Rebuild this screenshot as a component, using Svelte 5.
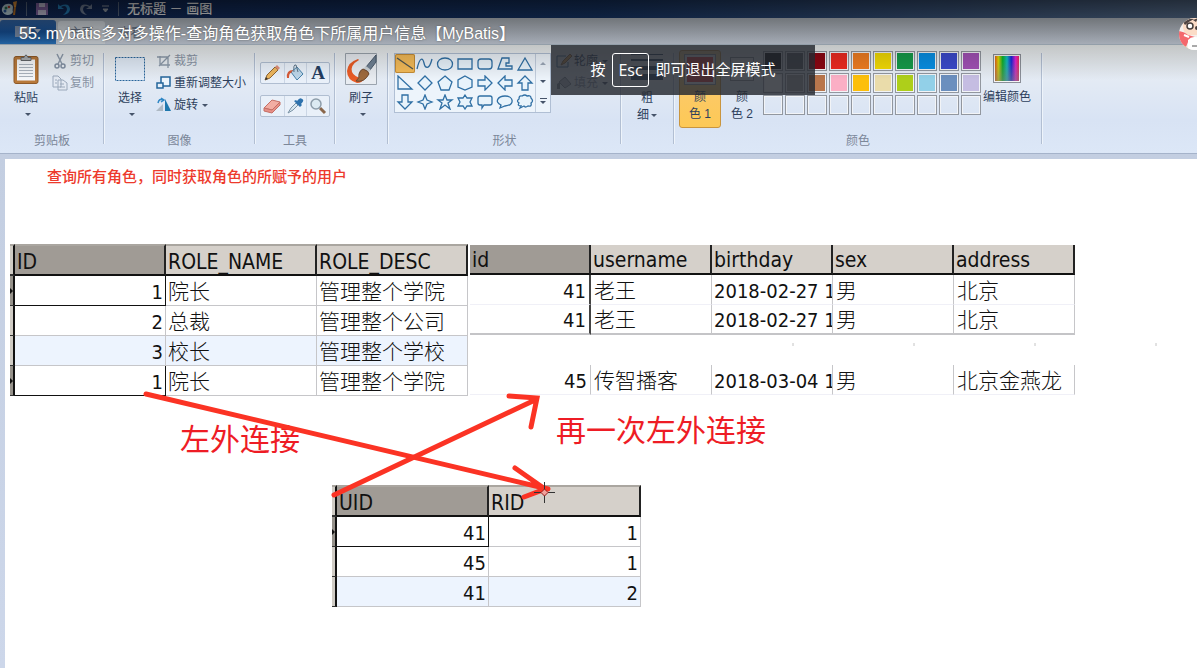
<script>
  const shapes = [
    'M2 2 L18 13',
    'M2 13 C5 0 8 2 9 7 S14 15 17 3',
    'M10 2 C20 2 20 14 10 14 C0 14 0 2 10 2Z',
    'M3 3H17V13H3Z',
    'M6 3H14Q17 3 17 6V10Q17 13 14 13H6Q3 13 3 10V6Q3 3 6 3Z',
    'M3 13L7 2H14V7H11V10H17V13Z',
    'M10 2L17 14H3Z',
    'M3 1V14H17Z',
    'M10 1L17 8L10 15L3 8Z',
    'M10 1L17 7L14 15H6L3 7Z',
    'M10 1L17 5V12L10 15L3 12V5Z',
    'M3 5H10V1L17 8L10 15V11H3Z',
    'M17 5H10V1L3 8L10 15V11H17Z',
    'M10 1L17 8H13V15H7V8H3Z',
    'M7 1H13V8H17L10 15L3 8H7Z',
    'M10 1L12 6L17 8L12 10L10 15L8 10L3 8L8 6Z',
    'M10 1L12 6H17L13 9L15 15L10 11L5 15L7 9L3 6H8Z',
    'M10 1L12 4H17L15 8L17 12H12L10 15L8 12H3L5 8L3 4H8Z',
    'M5 2H15Q17 2 17 4V9Q17 11 15 11H9L7 14V11H5Q3 11 3 9V4Q3 2 5 2Z',
    'M10 2C19 2 20 11 10 12L5 14L6 11C-1 8 3 2 10 2Z',
    'M7 2Q10 0 12 2Q16 1 16 4Q19 7 16 9Q17 13 13 12Q10 14 9 12L5 14L6 12Q2 12 4 9Q1 7 4 5Q4 1 7 2Z'
  ];
  const palette = [
    '#000000', '#606468', '#8b0612', '#ee2a20', '#f07d22', '#f2da04', '#169b4a', '#088fe4', '#3a49cc', '#a151b5',
    '#ffffff', '#aaaaaa', '#b9764c', '#fbafc5', '#fdbf0b', '#eadcaa', '#aecf1a', '#92d0e8', '#6b8fbe', '#c5bde2',
    '', '', '', '', '', '', '', '', '', ''
  ];
  const roles = [
    ['1', '院长', '管理整个学院'],
    ['2', '总裁', '管理整个公司'],
    ['3', '校长', '管理整个学校'],
    ['1', '院长', '管理整个学院']
  ];
  const users = [
    ['41', '老王', '2018-02-27 1', '男', '北京'],
    ['41', '老王', '2018-02-27 1', '男', '北京'],
    null,
    ['45', '传智播客', '2018-03-04 1', '男', '北京金燕龙']
  ];
  const links = [['41', '1'], ['45', '1'], ['41', '2']];
  let selected = $state(0);
</script>

<div class="app">
  <header class="titlebar">
    <svg width="18" height="18" viewBox="0 0 18 18"><path d="M2 11C1 5 8 2 12 5C14 7 12 9 13 12C11 16 4 16 2 11Z" fill="#c4dce4"/><circle cx="6" cy="8" r="1.500" fill="#277b59"/><circle cx="9" cy="7" r="1.300" fill="#b94031"/><circle cx="5" cy="11" r="1.500" fill="#305fa5"/><path d="M14 15L15 7" stroke="#be7323" stroke-width="2"/><path d="M13 2L17 1L16 7H14Z" fill="#ed9838"/></svg>
    <i class="bar"></i>
    <button class="quick" aria-label="保存"><svg width="14" height="14" viewBox="0 0 14 14"><path d="M1 1H13V13H1Z" fill="#8c6baf"/><path d="M4 1H10V5H4ZM3 8H11V13H3Z" fill="#d0cbe4"/></svg></button>
    <button class="quick" aria-label="撤消"><svg width="14" height="14" viewBox="0 0 14 14"><path d="M1 2V7H7L4 5Q9 2 10 7Q10 10 6 13Q13 12 13 7Q12 0 3 4Z" fill="#2585c4"/></svg></button>
    <button class="quick" aria-label="重做"><svg width="14" height="14" viewBox="0 0 14 14"><path d="M13 2V7H7L10 5Q5 2 4 7Q4 10 8 13Q1 12 1 7Q2 0 11 4Z" fill="#77869f"/></svg></button>
    <button class="quick" aria-label="自定义"><svg width="9" height="8" viewBox="0 0 9 8"><path d="M1 1H8M2 4H7L4.500 7Z" fill="#9ca5b1" stroke="#9ca5b1"/></svg></button>
    <i class="bar"></i>
    <span>无标题 － 画图</span>
  </header>

  <nav class="tabs">
    <button class="file" aria-label="文件"><svg width="28" height="14" viewBox="0 0 28 14"><path d="M1 1H15V12H1Z" fill="#8195b2"/><path d="M20 4H27L23.500 8Z" fill="#acbace"/></svg></button>
    <button class="tab active">主页</button>
    <button class="tab">查看</button>
  </nav>

  <section class="ribbon">
    <div class="group clipboard">
      <div class="body">
        <button class="big">
          <svg width="26" height="32" viewBox="0 0 26 31"><rect x="1" y="3" width="24" height="27" rx="2" fill="#b8793a" stroke="#8f5a28"/><path d="M4 6H22V27H4Z" fill="#f5f7fa"/><path d="M6 11H20M6 14H20M6 17H20M6 20H20M6 23H20" stroke="#aab2bc"/><path d="M8 7V4H11Q13-1 15 4H18V7Z" fill="#a9adb0" stroke="#626568"/></svg>
          <span>粘贴</span><i class="caret"></i>
        </button>
        <div class="stack">
          <button class="cmd off"><svg width="16" height="16" viewBox="0 0 16 16"><path d="M5 1L10 11M11 1L6 11" stroke="#8f9cad" stroke-width="1.500"/><circle cx="5" cy="13" r="2" fill="none" stroke="#8290a3" stroke-width="1.500"/><circle cx="11" cy="13" r="2" fill="none" stroke="#8290a3" stroke-width="1.500"/></svg>剪切</button>
          <button class="cmd off"><svg width="16" height="16" viewBox="0 0 16 16"><path d="M1 1H6L9 4V12H1ZM6 5H11L15 8V15H6Z" fill="#e3e9f2" stroke="#9aa8ba"/><path d="M8 9H12M8 12H13M3 5H5M3 8H5" stroke="#9aa8ba"/></svg>复制</button>
        </div>
      </div>
      <h2>剪贴板</h2>
    </div>

    <div class="group image">
      <div class="body">
        <button class="big"><svg width="32" height="32" viewBox="0 0 32 32"><rect x="1.500" y="4.500" width="29" height="23" fill="#e1ebf7" stroke="#28659a" stroke-dasharray="2 1"/></svg><span>选择</span><i class="caret"></i></button>
        <div class="stack">
          <button class="cmd off"><svg width="16" height="16" viewBox="0 0 16 16"><path d="M4 3V12H14M1 4H12V15M3 13L14 2" fill="none" stroke="#8c9aaa" stroke-width="1.300"/></svg>裁剪</button>
          <button class="cmd"><svg width="16" height="16" viewBox="0 0 16 16"><path d="M5 2H14V11H5Z" fill="#edf5fc" stroke="#24659b" stroke-width="1.500"/><path d="M1 8H7V13H1Z" fill="#e6f0fa" stroke="#24659b" stroke-width="1.500"/></svg>重新调整大小</button>
          <button class="cmd"><svg width="16" height="16" viewBox="0 0 16 16"><path d="M9 2V14H15Z" fill="#1e77ad"/><path d="M7 7V14H0Z" fill="#aeb9c4"/><path d="M2 6Q3 1 7 3M5 1L8 3L5 5" fill="none" stroke="#3087c5" stroke-width="1.500"/></svg>旋转<i class="caret"></i></button>
        </div>
      </div>
      <h2>图像</h2>
    </div>

    <div class="group tools">
      <div class="toolbox">
        <div class="toolrow">
          <button aria-label="铅笔"><svg width="18" height="18" viewBox="0 0 18 18"><path d="M2 16L4 11L12 3L15 6L7 14Z" fill="#edb65d" stroke="#8e6432"/><path d="M12 3L14 1L17 4L15 6Z" fill="#df8f7a"/><path d="M2 16L3 13L5 15Z" fill="#333"/></svg></button>
          <button aria-label="填充"><svg width="18" height="18" viewBox="0 0 18 18"><path d="M5 8L11 3L17 10L11 16Z" fill="#bcd6e9" stroke="#4682ab"/><path d="M8 8Q7 0 10 1L12 8" fill="none" stroke="#5b7488"/><path d="M1 14Q0 6 7 6L5 9Q3 9 3 14Z" fill="#d85b37"/></svg></button>
          <button class="glyph" aria-label="文本">A</button>
        </div>
        <div class="toolrow">
          <button aria-label="橡皮擦"><svg width="18" height="18" viewBox="0 0 18 18"><path d="M1 11L9 3L17 5L9 13Z" fill="#f2ada3" stroke="#c46e65"/><path d="M1 11L9 13L17 5V8L9 16L1 14Z" fill="#e78f86" stroke="#c46e65"/></svg></button>
          <button aria-label="取色器"><svg width="18" height="18" viewBox="0 0 18 18"><path d="M2 16L5 11L10 6L12 8L7 13Z" fill="#d9e7ef" stroke="#7a92a5"/><path d="M8 4L14 10L16 8L15 7Q19 3 16 2Q14 0 11 4L10 3Z" fill="#2e72ad"/></svg></button>
          <button aria-label="放大镜"><svg width="18" height="18" viewBox="0 0 18 18"><path d="M11 11L16 16" stroke="#8a674b" stroke-width="3"/><circle cx="7" cy="7" r="5" fill="#dceaf2" stroke="#8d9daa" stroke-width="1.500"/></svg></button>
        </div>
      </div>
      <h2>工具</h2>
    </div>

    <div class="group brush">
      <button class="big">
        <svg width="32" height="32" viewBox="0 0 32 32"><path d="M.5.5H31.500V31.500H.5Z" fill="#e8ecf1" stroke="#9ba4ae"/><path d="M13 6Q3 9 2 18Q2 27 12 30Q17 30 19 26Q9 24 7 19Q5 12 14 7Z" fill="#e95b25"/><path d="M31 2L21 14L25 17L31 9Z" fill="#6f8194" stroke="#49596a"/><path d="M21 13L26 17L23 20L18 16Z" fill="#cbd1d5"/><path d="M18 16Q24 18 24 21Q19 30 11 28Q15 25 14 21Q15 17 18 16Z" fill="#9e6a3d" stroke="#6d4930"/></svg>
        <span>刷子</span><i class="caret"></i>
      </button>
      <h2></h2>
    </div>

    <div class="group shape">
      <div class="body">
        <div class="gallery">
          <div class="shapes">
            {#each shapes as d, i}
              <button class:on={selected === i} aria-label={'形状 ' + (i + 1)} onclick={() => (selected = i)}><svg width="20" height="16" viewBox="0 0 20 16"><path {d} fill={i < 2 ? 'none' : '#e8f3fb'} stroke={i ? '#2f6fa4' : '#4f5550'} stroke-width="1.300"/></svg></button>
            {/each}
          </div>
          <div class="scroller"><button aria-label="向上"><i class="caret up"></i></button><button aria-label="向下"><i class="caret"></i></button><button class="more" aria-label="更多"><i class="caret"></i></button></div>
        </div>
        <div class="stack">
          <button class="cmd"><svg width="16" height="16" viewBox="0 0 16 16"><path d="M10 3H1V14H12V9" fill="none" stroke="#3a6c98"/><path d="M5 12L7 8L14 1L16 3L9 10Z" fill="#e3a64f" stroke="#90683f"/></svg>轮廓<i class="caret"></i></button>
          <button class="cmd off"><svg width="16" height="16" viewBox="0 0 16 16"><path d="M3 7L9 2L15 9L9 13Z" fill="#b5bec8" stroke="#7c8793"/><path d="M1 14V9L4 7V14Z" fill="#7c8793"/></svg>填充<i class="caret"></i></button>
        </div>
      </div>
      <h2>形状</h2>
    </div>

    <div class="group size">
      <button class="big"><svg width="32" height="32" viewBox="0 0 32 32"><path d="M0 1H32V2H0ZM0 6H32V8H0ZM0 13H32V17H0ZM0 21H32V27H0Z" fill="#2c4560"/></svg><span>粗</span><span class="second">细<i class="caret"></i></span></button>
      <h2></h2>
    </div>

    <div class="group colors">
      <div class="body">
        <button class="color chosen"><i class="well red"></i><span>颜</span><span class="second">色 1</span></button>
        <button class="color"><i class="well white"></i><span>颜</span><span class="second">色 2</span></button>
        <div class="palette">
          {#each palette as c}
            <button aria-label={c || '空'} style:background-color={c || 'transparent'}></button>
          {/each}
        </div>
        <button class="big edit"><i class="spectrum"></i><span>编辑颜色</span></button>
      </div>
      <h2>颜色</h2>
    </div>
  </section>

  <main class="workspace">
    <div class="canvas">
      <p class="note heading">查询所有角色，同时获取角色的所赋予的用户</p>

      <table class="grid roles">
        <thead><tr><th class="handle"></th><th class="key">ID</th><th>ROLE_NAME</th><th>ROLE_DESC</th></tr></thead>
        <tbody>
          {#each roles as r, i}
            <tr class:tint={i === 2} class:current={i === 0 || i === 3}><td class="handle">{#if i === 0 || i === 3}<i></i>{/if}</td><td class="num">{r[0]}</td><td>{r[1]}</td><td>{r[2]}</td></tr>
          {/each}
        </tbody>
      </table>

      <table class="grid users">
        <thead><tr><th class="key">id</th><th>username</th><th>birthday</th><th>sex</th><th>address</th></tr></thead>
        <tbody>
          {#each users as u, i}
            {#if u}
              <tr class:last={i === 1} class:dark={i < 2}>{#each u as v, j}<td class:num={j === 0} class:date={j === 2}>{v}</td>{/each}</tr>
            {:else}
              <tr class="gap"><td colspan="5"></td></tr>
            {/if}
          {/each}
        </tbody>
      </table>

      <table class="grid links">
        <thead><tr><th class="handle"></th><th class="key">UID</th><th>RID</th></tr></thead>
        <tbody>
          {#each links as l, i}
            <tr class:tint={i === 2} class:current={i === 0}><td class="handle">{#if i === 0}<i></i>{/if}</td><td class="num">{l[0]}</td><td class="num">{l[1]}</td></tr>
          {/each}
        </tbody>
      </table>

      <p class="note left">左外连接</p>
      <p class="note right">再一次左外连接</p>

      <svg class="ink" width="1192" height="509" viewBox="5 159 1192 509">
        <path d="M793 343V346M914 343V346M1035 343V346M1156 343V346" stroke="#c4c4c4"/>
        <g fill="none" stroke="#fb3324" stroke-width="5" stroke-linecap="round">
          <path d="M146 394L548 489M515 468L545 489L524 497"/>
          <path d="M334 495L535 400M509 396L537 398L531 427"/>
        </g>
        <path d="M544.500 482V489M544.500 495V503M534 492.500H541M548 492.500H555" stroke="#333"/>
        <path d="M544.500 489L548 492.500L544.500 496L541 492.500Z" fill="#f2a19b" stroke="#941b1b"/>
      </svg>
    </div>
  </main>

  <div class="shade"></div>
  <h1>55. mybatis多对多操作-查询角色获取角色下所属用户信息【MyBatis】</h1>
  <div class="toast">按 <kbd>Esc</kbd> 即可退出全屏模式</div>
  <svg class="avatar" width="32" height="32" viewBox="0 0 32 32">
    <defs><clipPath id="face"><circle cx="16" cy="16" r="16"/></clipPath></defs>
    <g clip-path="url(#face)"><path d="M0 0H32V32H0Z" fill="#f4f0ed"/><path d="M3 0H32V17H8Q3 13 4 5Z" fill="#fbdcc7"/><path d="M4 4Q9 0 15 1Q9 4 6 7ZM14 2L19 0L17 4Z" fill="#4d4341"/><circle cx="11" cy="8" r="3" fill="#fff" stroke="#443d3b" stroke-width="1.500"/><circle cx="18" cy="10" r="2" fill="#443d3b"/><path d="M0 13Q6 14 9 17L16 19L9 24L7 29L0 24Z" fill="#f4686d"/><path d="M5 17L10 19" stroke="#fff" stroke-width="2"/><path d="M9 22Q13 17 20 20V32H9Z" fill="#fff"/><path d="M13 28H18" stroke="#555"/><path d="M1 25L10 31H0Z" fill="#e9d06b"/></g>
  </svg>
</div>

<style>
  :global(body) { margin: 0; }
  .app { position: relative; min-height: 100vh; overflow: hidden; display: flex; flex-direction: column; background: #c9d3e5; font: 12px/16px "Liberation Sans", "Noto Sans CJK SC", sans-serif; color: #2d3f5c; }
  button { font: inherit; color: inherit; padding: 0; border: 0; background: none; }
  svg { display: block; flex: none; }
  h1, h2, p { margin: 0; font-weight: 400; }
  .titlebar { height: 18px; display: flex; align-items: center; gap: 8px; background: linear-gradient(90deg, #10285a, #18386c 50%, #587090); font-size: 13px; font-weight: 500; white-space: nowrap; }
  .titlebar .bar { width: 1px; height: 14px; background: #5c6c86; }
  .titlebar .quick { display: flex; }
  .titlebar span { color: #fff; }
  .tabs { height: 27px; display: flex; gap: 2px; background: linear-gradient(#bcc3cb, #ccd4e1); border-bottom: 1px solid #b4c2cf; box-sizing: border-box; }
  .file { width: 56px; height: 24px; margin-top: 2px; border-radius: 3px 3px 0 0; background: linear-gradient(#3467a8, #17549e 50%, #2c79c4); display: grid; place-items: center; }
  .tab { width: 47px; margin-top: 3px; color: #68758a; }
  .tab.active { background: #dce2e8; border-radius: 3px 3px 0 0; }

  .ribbon { display: flex; height: 109px; box-sizing: border-box; padding-top: 5px; background: linear-gradient(#eef1f1, #e4ebf4 30%, #d8e3f4 70%, #dce7f7); border-bottom: 1px solid #a5b3ca; }
  .group { position: relative; flex: none; box-sizing: border-box; padding-top: 3px; display: flex; flex-direction: column; justify-content: space-between; }
  .group::after { content: ""; position: absolute; right: 0; top: 3px; bottom: 9px; width: 1px; background: #b2bfd3; box-shadow: 1px 0 #eef4fb; }
  .group h2 { height: 16px; font-size: 12px; text-align: center; color: #7b8799; margin-bottom: 4px; }
  .body { display: flex; align-items: flex-start; }
  .clipboard { width: 104px; }
  .image { width: 151px; }
  .tools { width: 80px; }
  .brush { width: 53px; }
  .shape { width: 233px; }
  .size { width: 53px; }
  .colors { width: 368px; padding-top: 0; }
  .big { display: flex; flex-direction: column; align-items: center; width: 52px; white-space: nowrap; }
  .big svg { margin-bottom: 5px; }
  .big > .caret { margin-top: 7px; }
  .caret { display: inline-block; border: 3px solid transparent; border-top-color: #46546a; border-bottom: 0; vertical-align: middle; margin-left: 2px; }
  .big > .caret { margin-left: 4px; }
  .caret.up { border-bottom: 3px solid #9ba7b7; border-top: 0; }
  .stack { display: flex; flex-direction: column; gap: 6px; }
  .cmd { height: 16px; display: flex; align-items: center; gap: 2px; white-space: nowrap; }
  .off { color: #8a95a5; }
  .toolbox { padding: 9px 5px 0 5px; display: flex; flex-direction: column; gap: 11px; }
  .toolrow { height: 22px; box-sizing: border-box; display: grid; grid-template-columns: repeat(3, 1fr); border: 1px solid #b0bed1; border-radius: 2px; background: #e9f0f9; }
  .toolrow button { display: grid; place-items: center; }
  .toolrow button + button { border-left: 1px solid #cbd6e5; }
  .toolrow .glyph { font: bold 19px/20px "Liberation Serif", serif; color: #243d60; }
  .shape .body { padding-left: 6px; gap: 5px; }
  .gallery { display: flex; height: 60px; box-sizing: border-box; border: 1px solid #b0bfd4; background: #edf4fb; }
  .shapes { display: grid; grid-template-columns: repeat(7, 20px); grid-template-rows: repeat(3, 1fr); }
  .shapes button { display: grid; place-items: center; box-sizing: border-box; }
  .shapes .on { background: #f4bb58; box-shadow: inset 0 0 0 1px #c58d37; border-radius: 2px; }
  .scroller { display: grid; width: 14px; border-left: 1px solid #c2cede; }
  .scroller button { display: flex; flex-direction: column; gap: 2px; align-items: center; justify-content: center; }
  .scroller .caret { margin: 0; }
  .more::before { content: ""; width: 7px; height: 1px; background: #46546a; }
  .second { margin-top: 1px; }
  .color { width: 42px; height: 78px; box-sizing: border-box; display: flex; flex-direction: column; align-items: center; border: 1px solid transparent; border-radius: 3px; padding-top: 3px; }
  .colors .body { padding-left: 5px; }
  .chosen { background: linear-gradient(#f9d896, #fcc964 60%, #fdc956); border-color: #c9953e; }
  .well { box-sizing: border-box; border: 1px solid #8e949d; box-shadow: inset 0 0 0 2px #f3f4f6; }
  .red { width: 32px; height: 31px; margin-bottom: 4px; background: #e83a36; }
  .white { width: 24px; height: 24px; margin: 3px 0 8px; background: #fff; }
  .palette { display: grid; grid-template-columns: repeat(10, 20px); grid-auto-rows: 20px; gap: 2px; margin-top: 1px; }
  .palette button { border: 1px solid #92979f; box-shadow: inset 0 0 0 1px #f2f4f7; }
  .edit { margin-top: 4px; }
  .spectrum { width: 28px; height: 29px; box-sizing: border-box; border: 1px solid #8b8f98; box-shadow: inset 0 0 0 1px #f5f5f5; margin-bottom: 6px; background: linear-gradient(transparent 20%, #7779), linear-gradient(90deg, #e43c20, #e6d900, #0bb52c, #12bfc4, #1a27dd, #e921d5, #ef2b33); }

  .workspace { flex: 1; display: flex; padding: 5px 0 0 5px; background: linear-gradient(#c3cee1, #cdd7ea); }
  .canvas { flex: 1; position: relative; overflow: hidden; background: #fff; }
  .note { position: absolute; white-space: nowrap; color: #ee1c25; font-family: "Noto Sans CJK SC", sans-serif; }
  .heading { left: 42px; top: 7px; font-size: 15px; line-height: 20px; font-weight: 500; color: #ed3a2c; }
  .left, .right { font-size: 30px; line-height: 36px; font-weight: 400; }
  .left { left: 175px; top: 260px; }
  .right { left: 551px; top: 251px; }
  .ink { position: absolute; left: 0; top: 0; }
  .grid { position: absolute; border-collapse: separate; border-spacing: 0; table-layout: fixed; font: 21px/24px "DejaVu Sans Condensed", "Noto Sans CJK SC", sans-serif; color: #111; }
  .grid th, .grid td { box-sizing: border-box; height: 30px; padding: 2px 2px 0; overflow: hidden; white-space: nowrap; text-align: left; font-weight: 300; border-right: 1px solid #c6c6c9; border-bottom: 1px solid #c6c6c9; }
  .grid th { font-weight: 400; background: #d5d0ca; border-right: 2px solid #222; border-bottom: 2px solid #111; }
  .grid .key { background: #a09b95; }
  .grid .num { text-align: right; font-size: 20px; }
  .grid .date { font-size: 20px; padding-right: 0; padding-left: 2px; }
  .grid .handle { width: 5px; padding: 0; background: #d0ccc5; border-right: 2px solid #111; border-bottom-color: #333; }
  .current .handle { background: #96928b; }
  .handle i { display: block; border: 3px solid transparent; border-left-color: #111; border-right: 0; }
  .grid .current .handle + td { border-right: 1px solid #111; border-bottom-color: #111; }
  .tint td:not(.handle) { background: #edf4fe; }
  .roles { left: 5px; top: 85px; width: 458px; }
  .links { left: 327px; top: 326px; width: 309px; }
  .roles th, .links th { height: 32px; border-top: 2px solid #aaa6a0; padding-top: 4px; }
  .users { left: 465px; top: 86px; width: 605px; }
  .users td { border-bottom-color: #f0f0f7; padding-left: 3px; }
  .users .num { padding-right: 3px; }
  .users .dark .num { border-right: 2px solid #444; }
  .users .last td { border-bottom: 2px solid #c4c4c7; }
  .users .gap td { border: 0; }

  .shade { position: absolute; inset: 0 0 auto; height: 80px; pointer-events: none; background: linear-gradient(rgba(0,0,0,.6), rgba(0,0,0,.4) 18px, rgba(0,0,0,.18) 45px, transparent); }
  h1 { position: absolute; left: 19px; top: 24px; font-size: 16px; line-height: 20px; color: #fff; white-space: nowrap; text-shadow: 0 0 2px #555; }
  .toast { position: absolute; left: 551px; top: 45px; width: 264px; height: 50px; display: flex; align-items: center; justify-content: center; gap: 7px; background: rgba(38,42,49,.83); color: #fff; font-size: 15px; white-space: nowrap; }
  kbd { box-sizing: border-box; height: 34px; padding: 0 5px; border: 1px solid #fff; border-radius: 3px; font: 16px/32px "Open Sans", sans-serif; }
  .avatar { position: absolute; right: -14px; top: 18px; }
</style>
